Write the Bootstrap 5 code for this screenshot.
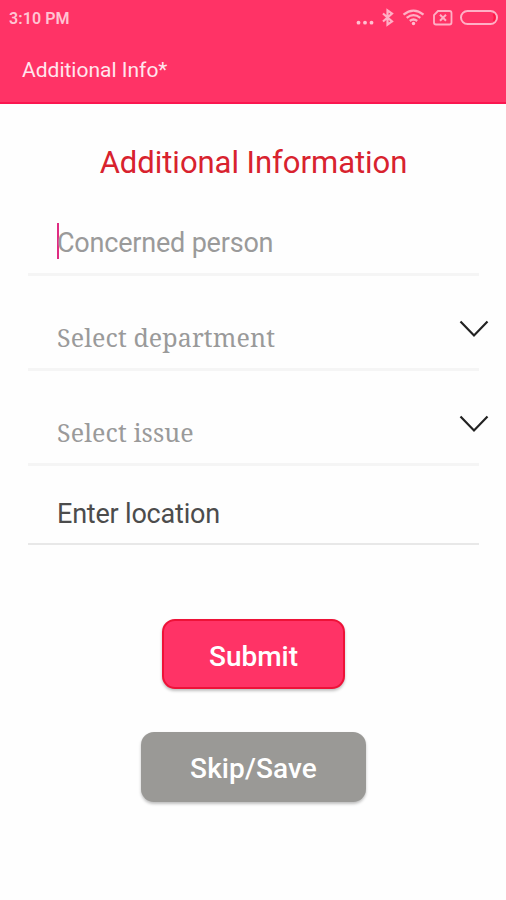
<!DOCTYPE html>
<html lang="en">
<head>
<meta charset="utf-8">
<meta name="viewport" content="width=device-width, initial-scale=1">
<title>Additional Info</title>
<link href="https://cdn.jsdelivr.net/npm/bootstrap@5.3.0/dist/css/bootstrap.min.css" rel="stylesheet">
<style>
  body { font-family: Roboto, "Liberation Sans", sans-serif; background: #fefefe; height: 900px; overflow: hidden; }
  .app-header { background: #ff3366; height: 104px; border-bottom: 2px solid #fb1650; color: #ffe6ed; }
  .status-bar { height: 36px; padding: 0 8px 0 9px; }
  .status-time { font-size: 16px; font-weight: 600; line-height: 37px; color: #ffc4d3; letter-spacing: .1px; }
  .app-title { font-size: 21px; line-height: 68px; padding-left: 22px; font-weight: 400; }
  .form-title { font-size: 31px; line-height: 40px; padding: 39px 0 0 1px; color: #d8222e; font-weight: 400; letter-spacing: -.03px; }
  .field-list { margin: 0 27px 0 28px; }
  .field-row { padding-left: 29px; font-size: 27px; line-height: 32px; border-bottom: 3px solid #f5f5f5; color: #9a9a9a; }
  .field-person { height: 93px; padding-bottom: 14px; letter-spacing: -.2px; }
  .field-select { height: 95px; padding-bottom: 15px; font-family: "Noto Serif", "DejaVu Serif Condensed", "DejaVu Serif", serif; font-stretch: condensed; font-size: 25px; letter-spacing: .1px; }
  .field-location { height: 79px; padding-bottom: 13px; color: #4c4c4c; border-bottom: 2px solid #e8e8e8; letter-spacing: -.2px; }
  .caret { width: 2.5px; height: 36px; background: #df2c82; margin: 0 -2px 0 -.5px; }
  .chevron { margin-right: -11px; margin-bottom: 14px; }
  .btn-action { font-size: 28px; font-weight: 500; line-height: 36px; height: 70px; padding: 4px 0 0 1px; border-radius: 13px; box-shadow: 0 2px 3px rgba(0,0,0,.25); color: #fff; }
  .btn-submit { width: 183px; margin-top: 74px; background: #ff3366; border: 2px solid #ee1238; padding-top: 5px; }
  .btn-skip { width: 225px; margin-top: 43px; background: #9a9996; border: 0; letter-spacing: .1px; }
</style>
</head>
<body>
<header class="app-header">
  <div class="status-bar d-flex align-items-center justify-content-between">
    <span class="status-time">3:10 PM</span>
    <svg width="144" height="24" viewBox="354 6 144 24" fill="none" stroke="#ffb0c5" stroke-width="1.8">
      <g fill="#ffc0d0" stroke="none"><circle cx="358.500" cy="22.700" r="1.900"/><circle cx="365" cy="22.700" r="1.900"/><circle cx="371.500" cy="22.700" r="1.900"/></g>
      <path stroke-width="2.200" d="M383 13.500l9 8-4.500 3.200V10.300l4.500 3.200-9 8"/>
      <g stroke-width="2.300"><path d="M403.500 14.600q10-8 20 0M406.700 17.800q6.800-5.400 13.600 0M409.800 21q3.700-3 7.400 0"/></g>
      <circle cx="413.500" cy="23.500" r="1.700" fill="#ffc0d0" stroke="none"/>
      <path d="M438 11h11.500a2 2 0 0 1 2 2v9.500a2 2 0 0 1-2 2H436a2 2 0 0 1-2-2V15z"/>
      <path d="M440 14.800l6 6m0-6l-6 6" stroke-width="2"/>
      <rect x="461" y="11" width="36" height="13" rx="6.500" stroke-width="2"/>
      <path d="M493.500 14q2.300 3.500 0 7" stroke="#ff1845" stroke-width="2"/>
    </svg>
  </div>
  <div class="app-title">Additional Info*</div>
</header>
<main>
  <h1 class="form-title text-center mb-0">Additional Information</h1>
  <div class="field-list d-flex flex-column">
    <div class="field-row field-person d-flex align-items-end"><span class="caret"></span><span>Concerned person</span></div>
    <div class="field-row field-select d-flex align-items-end justify-content-between"><span>Select department</span>
      <svg class="chevron" width="32" height="20" viewBox="0 0 32 20" fill="none" stroke="#222" stroke-width="2.200"><path d="M2.500 2.500L16 16.500 29.500 2.500"/></svg></div>
    <div class="field-row field-select d-flex align-items-end justify-content-between"><span>Select issue</span>
      <svg class="chevron" width="32" height="20" viewBox="0 0 32 20" fill="none" stroke="#222" stroke-width="2.200"><path d="M2.500 2.500L16 16.500 29.500 2.500"/></svg></div>
    <div class="field-row field-location d-flex align-items-end"><span>Enter location</span></div>
  </div>
  <div class="d-flex flex-column align-items-center">
    <button type="button" class="btn btn-action btn-submit">Submit</button>
    <button type="button" class="btn btn-action btn-skip">Skip/Save</button>
  </div>
</main>
<script src="https://cdn.jsdelivr.net/npm/bootstrap@5.3.0/dist/js/bootstrap.bundle.min.js"></script>
</body>
</html>
